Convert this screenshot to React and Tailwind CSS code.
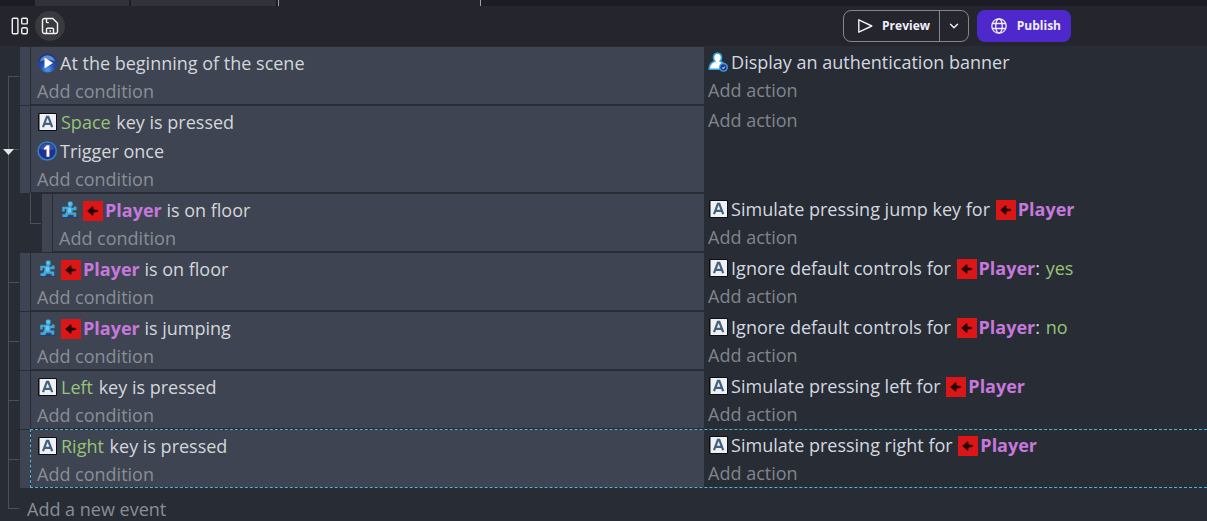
import { ChevronDown } from "lucide-react";

const EVENTS = [
  {
    id: "scene-start",
    conditions: [{ icon: "play", parts: ["At the beginning of the scene"] }],
    actions: [{ icon: "auth", parts: ["Display an authentication banner"] }],
  },
  {
    id: "space",
    open: true,
    conditions: [
      { icon: "key", parts: [{ value: "Space" }, " key is pressed"] },
      { icon: "once", parts: ["Trigger once"] },
    ],
    actions: [],
  },
  {
    id: "space-floor",
    nested: true,
    conditions: [{ icon: "behavior", parts: [{ object: "Player" }, " is on floor"] }],
    actions: [{ icon: "key", parts: ["Simulate pressing jump key for ", { object: "Player" }] }],
  },
  {
    id: "floor",
    conditions: [{ icon: "behavior", parts: [{ object: "Player" }, " is on floor"] }],
    actions: [
      { icon: "key", parts: ["Ignore default controls for ", { object: "Player" }, ": ", { value: "yes" }] },
    ],
  },
  {
    id: "jumping",
    conditions: [{ icon: "behavior", parts: [{ object: "Player" }, " is jumping"] }],
    actions: [
      { icon: "key", parts: ["Ignore default controls for ", { object: "Player" }, ": ", { value: "no" }] },
    ],
  },
  {
    id: "left",
    conditions: [{ icon: "key", parts: [{ value: "Left" }, " key is pressed"] }],
    actions: [{ icon: "key", parts: ["Simulate pressing left for ", { object: "Player" }] }],
  },
  {
    id: "right",
    selected: true,
    conditions: [{ icon: "key", parts: [{ value: "Right" }, " key is pressed"] }],
    actions: [{ icon: "key", parts: ["Simulate pressing right for ", { object: "Player" }] }],
  },
];

function PlayIcon() {
  return (
    <svg viewBox="0 0 20 20" className="size-5 shrink-0" aria-hidden="true">
      <defs>
        <radialGradient id="play-ball" cx="50%" cy="85%" r="75%">
          <stop offset="0" stopColor="#4f9bf0" />
          <stop offset="0.5" stopColor="#1f4fb4" />
          <stop offset="1" stopColor="#183a86" />
        </radialGradient>
      </defs>
      <circle cx="10.500" cy="10" r="9.400" fill="url(#play-ball)" />
      <path d="M3 8.500a7.600 7.600 0 0 1 15 0c-4-2.200-11-2.200-15 0Z" fill="#8fb4ee" opacity="0.65" />
      <path d="M7.500 4.500 16 10l-8.500 5.500Z" fill="#fff" />
    </svg>
  );
}

function KeyIcon() {
  return (
    <svg viewBox="0 0 20 20" className="size-5 shrink-0" aria-hidden="true">
      <rect x="1" y="1" width="19" height="18" rx="1.500" fill="#0c0e12" />
      <rect x="2.500" y="2" width="16.500" height="16" rx="0.500" fill="#eef0f2" />
      <path
        d="M6 15.200 9.900 4.800h1.400l3.900 10.400M7.600 11.800h6"
        fill="none"
        stroke="#44607f"
        strokeWidth="2.200"
      />
    </svg>
  );
}

function OnceIcon() {
  return (
    <svg viewBox="0 0 20 20" className="size-5 shrink-0" aria-hidden="true">
      <circle cx="10.200" cy="10" r="9.800" fill="#2f86c4" />
      <circle cx="10.200" cy="10" r="8.300" fill="#232f8e" />
      <path d="M3.200 8a7.200 7.200 0 0 1 14 0c-3 1.800-11 1.800-14 0Z" fill="#5a6fc0" opacity="0.5" />
      <path d="M6.800 7.200 9.800 4.300h2.600v11.400H9.500V7.800L7.700 9Z" fill="#fff" />
    </svg>
  );
}

// Running puzzle piece used by the platformer behavior.
function BehaviorIcon() {
  return (
    <svg viewBox="0 0 20 20" className="size-5 shrink-0" aria-hidden="true">
      <rect x="3" y="16.500" width="15.500" height="1.500" fill="#263a7c" />
      <path
        d="M8.800 2.500 10 1.500h2.500l1.200 1v3l-1.200 1v1.300h2.200v-1.300h2.800v3.800h-4v2.200h3.700v4.300h-2.700v-2H9.300l-1 2.200H3.500v-2.800H6l1.300-2.500V9H5.700v2.500H3.200V6.700h6.300v-.6l-.7-.8Z"
        fill="#3fa9dc"
      />
      <path d="M10 2.600h2.400v2.600H10ZM8.800 8h3.200v4.500H8.800Z" fill="#6cc6ee" />
    </svg>
  );
}

function AuthIcon() {
  return (
    <svg viewBox="0 0 20 20" className="size-5 shrink-0" aria-hidden="true">
      <path
        d="M9.500 1a4.200 4.200 0 0 0-4 4.500c0 1.700.5 2.800 1.300 3.700C3.300 10.300 1.200 12.500 1.200 17.300H16V12c-1-1.500-2.200-2.300-3.800-2.800.8-.9 1.300-2 1.300-3.700A4.200 4.200 0 0 0 9.500 1Z"
        fill="#fff"
        stroke="#35a4da"
        strokeWidth="1.600"
      />
      <circle cx="15.500" cy="15.300" r="4.500" fill="#4a9be0" />
      <circle cx="15.500" cy="15.300" r="3.100" fill="#1b3c94" />
      <path d="m14.300 15.500 1 1 1.600-2" fill="none" stroke="#9cc8f4" strokeWidth="1.100" />
    </svg>
  );
}

function PlayerSprite() {
  return (
    <svg viewBox="0 0 20 20" className="mr-0.5 ml-px inline-block size-5 align-[-4px]" aria-hidden="true">
      <rect width="20" height="20" fill="#dc1616" />
      <path d="M4.200 10 9.500 5.200l1 .8v2.600l3.200.2 1.900 1.200-1.900 1.200-3.200.2V14l-1 .8Z" fill="#2a0606" />
    </svg>
  );
}

const ICONS = {
  play: PlayIcon,
  key: KeyIcon,
  once: OnceIcon,
  behavior: BehaviorIcon,
  auth: AuthIcon,
};

function Instruction({ icon, parts }) {
  const Icon = ICONS[icon];

  return (
    <li className="flex h-[29px] items-center gap-[3px] whitespace-nowrap">
      <Icon />
      <span className="whitespace-pre">
        {parts.map((part, index) => {
          if (typeof part === "string") return <span key={index}>{part}</span>;
          if (part.value) {
            return (
              <span key={index} className="mx-px text-[#98c379]">
                {part.value}
              </span>
            );
          }
          return (
            <span key={index} className="font-bold text-[#c678dd]">
              <PlayerSprite />
              {part.object}
            </span>
          );
        })}
      </span>
    </li>
  );
}

// Left rail of the tree: vertical line with a tick at mid height.
function Rail({ first, open }) {
  return (
    <div className="relative flex w-5 shrink-0 flex-col pl-2">
      <div className={`mr-px h-[calc(50%+1px)] shrink-0 border-b border-[#4d5058] ${first ? "" : "border-l"}`} />
      <div className="flex-1 border-l border-[#4d5058]" />
      {open && (
        <button type="button" aria-label="Collapse event" className="absolute inset-x-0 top-1/2 pl-[3px]">
          <svg viewBox="0 0 11 6" className="h-1.5 w-[11px]" aria-hidden="true">
            <path d="M0 0h11L5.500 6Z" fill="#e4e6e8" />
          </svg>
        </button>
      )}
    </div>
  );
}

function EventRow({ event, first }) {
  const { conditions, actions, nested, selected, open } = event;

  return (
    <li className="relative flex">
      <div className="flex w-7/12 min-w-0">
        {nested ? (
          <>
            <div className="w-[30px] shrink-0 pl-2">
              <div className="h-full border-l border-[#4d5058]" />
            </div>
            <div className="w-3 shrink-0">
              <div className="mr-px h-[calc(50%+1px)] border-b border-l border-[#4d5058]" />
            </div>
          </>
        ) : (
          <Rail first={first} open={open} />
        )}
        <div className="w-2.5 shrink-0 border-t border-[#282c34] bg-[#3e4451]" />
        <div className="min-w-0 flex-1 border-y border-l border-[#282c34] bg-[#3e4451] pt-px pl-1.5 text-[#d3d6db]">
          <ul>
            {conditions.map((condition, index) => (
              <Instruction key={index} {...condition} />
            ))}
          </ul>
          <button type="button" className="block h-[27px] text-[#8a8e97]">
            Add condition
          </button>
        </div>
      </div>
      <div className="min-w-0 flex-1 pt-px pl-1 text-[#d3d8e0]">
        <ul>
          {actions.map((action, index) => (
            <Instruction key={index} {...action} />
          ))}
        </ul>
        <button type="button" className="block h-7 text-[#81858e]">
          Add action
        </button>
      </div>
      {selected && (
        <div className="pointer-events-none absolute inset-y-0 right-0 left-[30px] border border-r-0 border-dashed border-[#4fb3dc]" />
      )}
    </li>
  );
}

function Toolbar() {
  return (
    <header className="flex h-10 items-center justify-between bg-[#25252e] pr-[136px] pl-2 font-['Open_Sans',sans-serif] text-xs font-bold text-[#f0f0fa]">
      <div className="flex items-center gap-[3px]">
        <button type="button" aria-label="Project panels" className="flex size-6 items-center justify-center">
          <svg viewBox="0 0 18 18" className="size-[18px]" fill="none" stroke="#f2f2f5" strokeWidth="1.400" aria-hidden="true">
            <rect x="1.300" y="1.300" width="5.600" height="15.400" rx="1" />
            <rect x="10.700" y="1.300" width="5.600" height="5.600" rx="1" />
            <rect x="10.700" y="10.700" width="5.600" height="6" rx="1.500" />
          </svg>
        </button>
        <button
          type="button"
          aria-label="Save project"
          className="flex size-[30px] items-center justify-center rounded-full bg-[#393a3e]"
        >
          <svg viewBox="0 0 18 18" className="size-[18px]" fill="none" stroke="#f2f2f5" strokeWidth="1.400" aria-hidden="true">
            <path d="M4.600 1.500h7.200l4.700 4.700v8.200a2.100 2.100 0 0 1-2.100 2.100H3.600a2.100 2.100 0 0 1-2.100-2.100V3.600a2.100 2.100 0 0 1 2.100-2.100Z" />
            <path d="M5.500 16.500v-4.300a1 1 0 0 1 1-1h5a1 1 0 0 1 1 1v4.300M5.500 1.500v3.300a.8.800 0 0 0 .8.800h1.500M8.500 14h1.500" />
          </svg>
        </button>
      </div>
      <div className="flex gap-2">
        <div className="flex h-8 rounded-lg border border-[#85858f]">
          <button type="button" className="flex w-[95px] items-center justify-between pr-[9px] pl-[13px]">
            <svg viewBox="0 0 16 16" className="size-4" fill="none" stroke="#f0f0fa" strokeWidth="1.400" strokeLinejoin="round" aria-hidden="true">
              <path d="M1.800 1.800 14.800 8l-13 6.200Z" />
            </svg>
            Preview
          </button>
          <button
            type="button"
            aria-label="Preview options"
            className="flex w-[29px] items-center justify-center border-l border-[#85858f]"
          >
            <ChevronDown className="size-3.5" strokeWidth={2.5} />
          </button>
        </div>
        <button
          type="button"
          className="flex h-8 w-[94px] items-center justify-between rounded-lg bg-[#4f28cd] pr-2.5 pl-3.5"
        >
          <svg viewBox="0 0 16 16" className="size-4" fill="none" stroke="#f0f0fa" strokeWidth="1.300" aria-hidden="true">
            <circle cx="8" cy="8" r="7.200" />
            <ellipse cx="8" cy="8" rx="3.300" ry="7.200" />
            <path d="M1.300 5.500h13.400M1.300 10.500h13.400" />
          </svg>
          Publish
        </button>
      </div>
    </header>
  );
}

export default function App() {
  return (
    <div className="min-h-screen bg-[#282c34] font-['Open_Sans','Noto_Sans',sans-serif] text-[18px] leading-7">
      <div className="flex h-1.5 bg-[#1c1c26] pl-[35px]">
        <div className="w-[94px] bg-[#32323b]" />
        <div className="ml-0.5 w-[145px] bg-[#32323b]" />
        <div className="ml-0.5 w-[203px] border-x border-[#a0a0a8] bg-[#25252e]" />
      </div>
      <Toolbar />
      <main>
        <ul>
          {EVENTS.map((event, index) => (
            <EventRow key={event.id} event={event} first={index === 0} />
          ))}
        </ul>
        <div className="flex h-[33px] items-end">
          <div className="w-5 shrink-0 self-start pl-2">
            <div className="mr-px h-[21px] border-b border-l border-[#4d5058]" />
          </div>
          <button type="button" className="pl-[7px] leading-6 text-[#8a8e97]">
            Add a new event
          </button>
        </div>
      </main>
    </div>
  );
}
